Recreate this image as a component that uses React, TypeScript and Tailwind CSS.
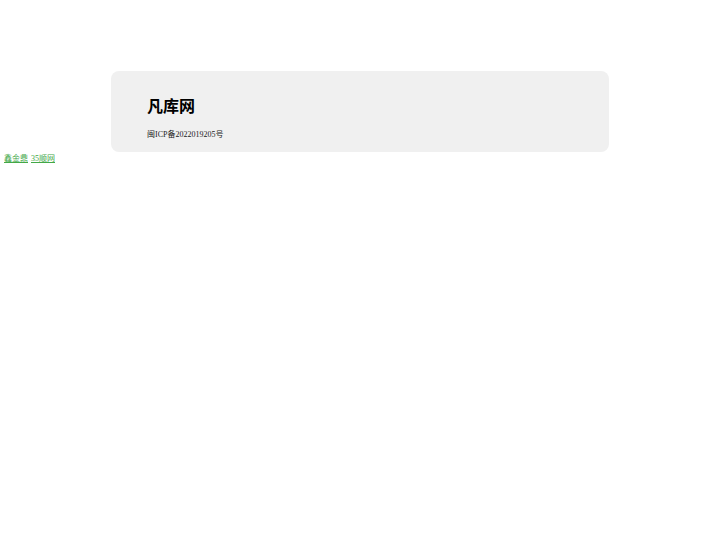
export default function App() {
  return (
    <div className="flow-root min-h-[540px] bg-white pt-[71px] font-['Liberation_Serif','Noto_Sans_CJK_SC',serif] text-black">
      <div className="mx-auto h-[81px] w-[498px] rounded-lg bg-[#f0f0f0] px-[36px] pt-[26px]">
        <h1 className="text-[16px] font-bold leading-[20px]">凡库网</h1>
        <p className="mt-[12px] text-[8px] leading-[12px] text-[#222]">闽ICP备2022019205号</p>
      </div>
      <div className="flex gap-[3px] px-[4px] pt-[1px] text-[8px] leading-[11px]">
        <a href="#" className="text-[#42a847] underline">鑫金鼎</a>
        <a href="#" className="text-[#42a847] underline">35顺网</a>
      </div>
    </div>
  )
}
